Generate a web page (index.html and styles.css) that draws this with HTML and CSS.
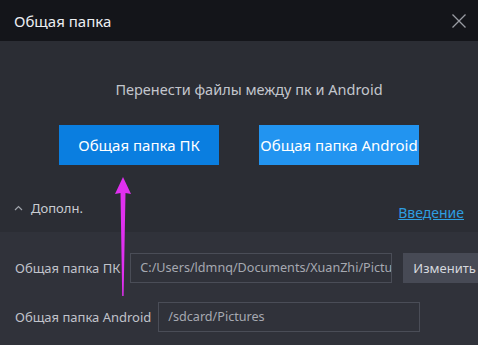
FILE: index.html
```html
<!DOCTYPE html>
<html lang="ru">
<head>
<meta charset="utf-8">
<title>Общая папка</title>
<link rel="stylesheet" href="styles.css">
</head>
<body>
<div class="window">
  <header class="titlebar">
    <span class="title">Общая папка</span>
    <svg class="close" width="16" height="16" viewBox="0 0 16 16"><path d="M1.5 1.5L14.5 14.5M14.5 1.5L1.5 14.5" stroke="#9a9ca3" stroke-width="1.3" fill="none"/></svg>
  </header>
  <section class="top">
    <p class="subtitle">Перенести файлы между пк и Android</p>
    <div class="buttons">
      <button class="btn btn-pc">Общая папка ПК</button>
      <button class="btn btn-android">Общая папка Android</button>
    </div>
    <div class="more-row">
      <span class="more"><svg class="chev" width="9" height="6" viewBox="0 0 9 6"><path d="M1 5L4.5 1.5L8 5" stroke="#9fa3ab" stroke-width="1.2" fill="none"/></svg>Дополн.</span>
      <a class="intro" href="#">Введение</a>
    </div>
  </section>
  <section class="bottom">
    <div class="row">
      <span class="label">Общая папка ПК</span>
      <div class="field field-pc"><span class="field-text">C:/Users/ldmnq/Documents/XuanZhi/Pictures</span></div>
      <button class="change">Изменить</button>
    </div>
    <div class="row">
      <span class="label">Общая папка Android</span>
      <div class="field field-android"><span class="field-text">/sdcard/Pictures</span></div>
    </div>
  </section>
  <svg class="arrow" width="24" height="124" viewBox="0 0 24 124"><path d="M12 0L20 17L14.5 16L12.6 119L11.2 119L9.5 16L4 17Z" fill="#e030f0"/></svg>
</div>
</body>
</html>
```
FILE: styles.css
```css
html, body {
  margin: 0;
  padding: 0;
}
body {
  background: #2b2d34;
  font-family: "Noto Sans", "Open Sans", sans-serif;
  overflow: hidden;
}
.window {
  position: relative;
  width: 478px;
  height: 345px;
  overflow: hidden;
  display: flex;
  flex-direction: column;
}
.titlebar {
  height: 41px;
  flex: none;
  background: #14151a;
  display: flex;
  align-items: center;
  justify-content: space-between;
  padding: 0 11px 0 14px;
  box-sizing: border-box;
}
.title {
  color: #eceef2;
  font-size: 15px;
  line-height: 20px;
}
.close {
  display: block;
}
.top {
  height: 191px;
  flex: none;
  box-sizing: border-box;
  padding-top: 38px;
}
.subtitle {
  margin: 0;
  padding-left: 20px;
  text-align: center;
  color: #c3c6cd;
  font-size: 14.5px;
  line-height: 20px;
}
.buttons {
  display: flex;
  justify-content: center;
  gap: 40px;
  margin-top: 26px;
}
.btn {
  width: 160px;
  height: 40px;
  border: none;
  padding: 0;
  color: #ffffff;
  font-family: inherit;
  font-size: 15px;
}
.btn-pc {
  background: #0a7ee0;
}
.btn-android {
  background: #2294f0;
}
.more-row {
  display: flex;
  justify-content: space-between;
  align-items: flex-end;
  padding: 0 14px 0 14px;
  margin-top: 34px;
}
.more {
  color: #c9ccd2;
  font-size: 13px;
  line-height: 18px;
  display: flex;
  align-items: center;
}
.chev {
  margin-right: 8px;
}
.intro {
  color: #2e9ee0;
  font-size: 14px;
  line-height: 18px;
  text-decoration: underline;
  margin-bottom: -5px;
}
.bottom {
  flex: 1;
  background: #30323a;
  padding: 21px 0 0 15px;
  display: flex;
  flex-direction: column;
  gap: 19px;
}
.row {
  display: flex;
  align-items: center;
  height: 30px;
}
.label {
  color: #c0c3ca;
  font-size: 13px;
  white-space: nowrap;
}
.field {
  height: 30px;
  box-sizing: border-box;
  border: 1px solid #4a4d57;
  color: #a6a9b1;
  font-size: 12.6px;
  line-height: 28px;
  padding-left: 9px;
  white-space: nowrap;
  overflow: hidden;
  width: 262px;
  flex: none;
}
.field-text {
  display: block;
  overflow: hidden;
}
.field-pc {
  margin-left: 10px;
}
.field-android {
  margin-left: 7px;
}
.change {
  margin-left: 11px;
  height: 30px;
  width: 80px;
  flex: none;
  border: none;
  background: #474a55;
  color: #d6d8de;
  font-family: inherit;
  font-size: 13px;
  text-align: left;
  padding-left: 10px;
}
.arrow {
  position: absolute;
  left: 111px;
  top: 177px;
}
```
